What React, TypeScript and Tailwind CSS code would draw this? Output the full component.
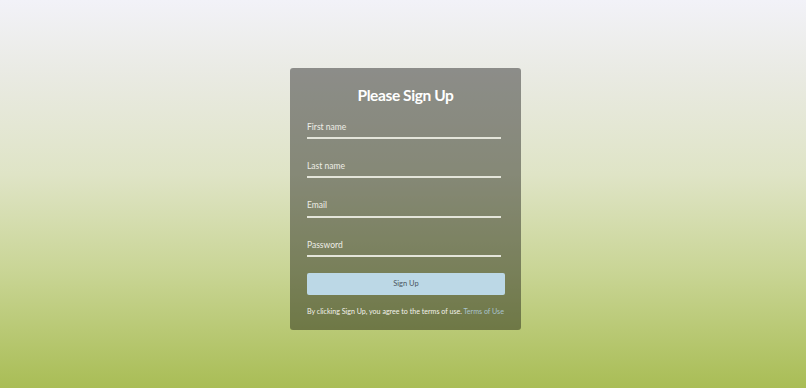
import React from "react";

export default function App() {
  const fields = ["First name", "Last name", "Email", "Password"];
  return (
    <div
      className="min-h-screen w-full flex justify-center pt-[68px] pl-[5px] bg-[linear-gradient(to_bottom,#f2f2f8_0%,#e9eae2_20%,#dfe4c6_45%,#c9d595_70%,#a9bd55_100%)]"
      style={{ fontFamily: "Lato, 'Open Sans', sans-serif" }}
    >
      <div className="w-[231px] h-[262px] rounded-[3px] bg-black/40 pt-[17px] px-[17px] flex flex-col">
        <h1 className="text-[15.5px] leading-[20px] font-bold tracking-[-0.4px] text-white text-center">
          Please Sign Up
        </h1>
        <div className="mt-[12px] flex flex-col gap-[17.4px]">
          {fields.map((f) => (
            <input
              key={f}
              type={f === "Password" ? "password" : "text"}
              placeholder={f}
              className="w-[194px] h-[22px] bg-transparent border-b-2 border-[#e4e5da] outline-none text-[8.5px] text-white placeholder:text-[#ededE6] pb-[1px]"
            />
          ))}
        </div>
        <button className="mt-[16px] w-[198px] h-[21.5px] rounded-[2px] bg-[#bcd8e6] text-[7.5px] text-[#4a5560]">
          Sign Up
        </button>
        <p className="mt-[12px] text-[7.1px] leading-[10px] text-[#f2f2ea] whitespace-nowrap">
          By clicking Sign Up, you agree to the terms of use.{" "}
          <a className="text-[#a9c3cc]">Terms of Use</a>
        </p>
      </div>
    </div>
  );
}
